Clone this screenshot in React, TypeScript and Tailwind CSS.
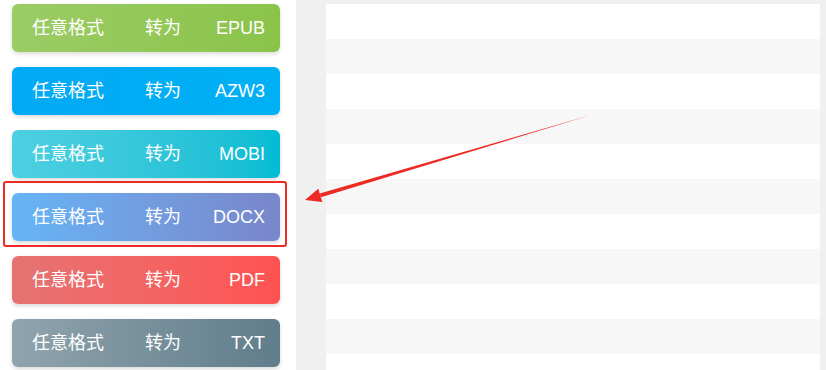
const formats = [
  { label: "EPUB", bg: "bg-gradient-to-r from-[#9ccc65] to-[#8bc34a]" },
  { label: "AZW3", bg: "bg-gradient-to-r from-[#03a9f4] to-[#00b0f4]" },
  { label: "MOBI", bg: "bg-gradient-to-r from-[#4dd0e1] to-[#00bcd4]" },
  { label: "DOCX", bg: "bg-gradient-to-r from-[#64b5f6] to-[#7986cb]", marked: true },
  { label: "PDF", bg: "bg-gradient-to-r from-[#e57373] to-[#ff5252]" },
  { label: "TXT", bg: "bg-gradient-to-r from-[#90a4ae] to-[#607d8b]" },
];

function ConvertButton({ label, bg, marked }: { label: string; bg: string; marked?: boolean }) {
  return (
    <div className="relative">
      {marked && (
        <div className="pointer-events-none absolute -left-[9px] -right-[7px] -top-[12px] -bottom-[6px] rounded-[3px] border-2 border-[#ee2a24]" />
      )}
      <button
        type="button"
        className={`flex h-[48px] w-full items-center rounded-[6px] pl-[20px] pr-[15px] text-[18px] text-white shadow-[0_2px_4px_rgba(0,0,0,0.15)] ${bg}`}
      >
        <span className="w-[113px] text-left">任意格式</span>
        <span>转为</span>
        <span className="ml-auto">{label}</span>
      </button>
    </div>
  );
}

export default function App() {
  const rows = Array.from({ length: 11 });

  return (
    <div
      className="relative flex h-[370px] w-[826px] overflow-hidden bg-white"
      style={{ fontFamily: '"Liberation Sans", "Noto Sans CJK SC", sans-serif' }}
    >
      <div className="flex w-[296px] flex-col gap-[15px] px-[12px] pt-[4px] pr-[16px]">
        {formats.map((f) => (
          <ConvertButton key={f.label} {...f} />
        ))}
      </div>

      <div className="flex-1 bg-[#f0f0f0] pl-[30px] pr-[6px] pt-[4px]">
        {rows.map((_, i) => (
          <div key={i} className={`h-[35px] ${i % 2 === 0 ? "bg-white" : "bg-[#f7f7f7]"}`} />
        ))}
      </div>

      {/* annotation arrow */}
      <svg className="pointer-events-none absolute left-0 top-0" width="826" height="370">
        <polygon points="591,115 320.9,197.3 319.7,193.5" fill="#ee2a24" />
        <polygon points="305,200 318.3,188.7 322.3,202.1" fill="#ee2a24" />
      </svg>
    </div>
  );
}
